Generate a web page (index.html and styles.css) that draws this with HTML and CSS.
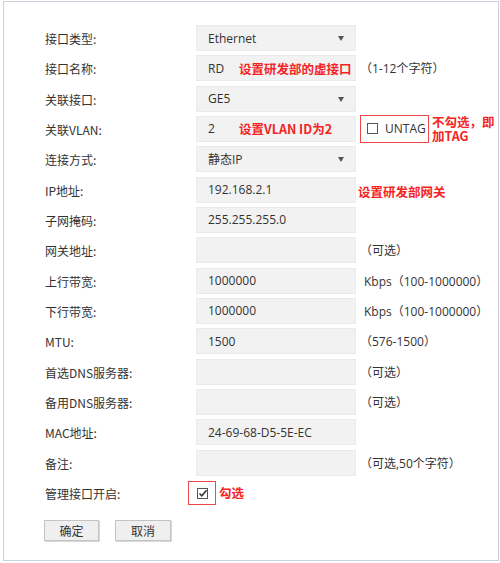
FILE: index.html
```html
<!DOCTYPE html>
<html lang="zh-CN">
<head>
<meta charset="utf-8">
<title>接口设置</title>
<link rel="stylesheet" href="styles.css">
</head>
<body>
<div class="frame">
  <div class="form">
    <div class="row">
      <div class="label">接口类型:</div>
      <div class="field select"><span>Ethernet</span><i class="arrow"></i></div>
    </div>
    <div class="row">
      <div class="label">接口名称:</div>
      <div class="field"><span class="val">RD</span><span class="note">设置研发部的虚接口</span></div>
      <div class="hint">（1-12个字符）</div>
    </div>
    <div class="row">
      <div class="label">关联接口:</div>
      <div class="field select"><span>GE5</span><i class="arrow"></i></div>
    </div>
    <div class="row">
      <div class="label">关联VLAN:</div>
      <div class="field"><span class="val">2</span><span class="note">设置VLAN ID为2</span></div>
      <div class="extra">
        <div class="untag"><span class="cb"></span><span>UNTAG</span></div>
        <div class="note note-two"><div class="ln">不勾选，即</div><div class="ln">加TAG</div></div>
      </div>
    </div>
    <div class="row">
      <div class="label">连接方式:</div>
      <div class="field select"><span>静态IP</span><i class="arrow"></i></div>
    </div>
    <div class="row">
      <div class="label">IP地址:</div>
      <div class="field"><span>192.168.2.1</span></div>
      <div class="note note-gw">设置研发部网关</div>
    </div>
    <div class="row">
      <div class="label">子网掩码:</div>
      <div class="field"><span>255.255.255.0</span></div>
    </div>
    <div class="row">
      <div class="label">网关地址:</div>
      <div class="field"></div>
      <div class="hint">（可选）</div>
    </div>
    <div class="row">
      <div class="label">上行带宽:</div>
      <div class="field"><span>1000000</span></div>
      <div class="hint hint-kbps">Kbps（100-1000000）</div>
    </div>
    <div class="row">
      <div class="label">下行带宽:</div>
      <div class="field"><span>1000000</span></div>
      <div class="hint hint-kbps">Kbps（100-1000000）</div>
    </div>
    <div class="row">
      <div class="label">MTU:</div>
      <div class="field"><span>1500</span></div>
      <div class="hint">（576-1500）</div>
    </div>
    <div class="row">
      <div class="label">首选DNS服务器:</div>
      <div class="field"></div>
      <div class="hint">（可选）</div>
    </div>
    <div class="row">
      <div class="label">备用DNS服务器:</div>
      <div class="field"></div>
      <div class="hint">（可选）</div>
    </div>
    <div class="row">
      <div class="label">MAC地址:</div>
      <div class="field"><span>24-69-68-D5-5E-EC</span></div>
    </div>
    <div class="row">
      <div class="label">备注:</div>
      <div class="field"></div>
      <div class="hint">（可选,50个字符）</div>
    </div>
    <div class="row">
      <div class="label">管理接口开启:</div>
      <div class="enable">
        <div class="redbox"><span class="cb checked"><svg viewBox="0 0 11 11" width="11" height="11"><path d="M2.5 5.5 L4.8 7.8 L9.5 2.2" fill="none" stroke="#333" stroke-width="1.6"/></svg></span></div>
        <span class="note note-check">勾选</span>
      </div>
    </div>
  </div>
  <div class="buttons">
    <button class="btn">确定</button>
    <button class="btn">取消</button>
  </div>
</div>
</body>
</html>
```
FILE: styles.css
```css
html, body {
  margin: 0;
  padding: 0;
  background: #fff;
}
body {
  font-family: "Open Sans", "Noto Sans CJK SC", sans-serif;
  font-size: 12px;
  color: #333;
}
.frame {
  box-sizing: border-box;
  width: 496px;
  height: 560px;
  margin: 1px 0 0 3px;
  border: 1px solid #c9d1dc;
  padding: 23px 0 0 41px;
}
.form {
  display: flex;
  flex-direction: column;
  gap: 4.33px;
}
.row {
  display: flex;
  align-items: center;
  height: 26px;
}
.label {
  width: 151px;
  flex: none;
  font-family: "Noto Sans CJK SC", sans-serif;
  color: #333;
  padding-top: 1px;
}
.field {
  box-sizing: border-box;
  width: 160px;
  height: 26px;
  flex: none;
  background: #f2f2f2;
  border: 1px solid #eaeaea;
  display: flex;
  align-items: center;
  padding-left: 11px;
  color: #333;
}
.select {
  justify-content: space-between;
  padding-right: 11px;
}
.arrow {
  width: 0;
  height: 0;
  border-top: 5px solid #555;
  border-left: 3.5px solid transparent;
  border-right: 3.5px solid transparent;
  margin-top: 1px;
}
.val {
  width: 31px;
  flex: none;
}
.note {
  font-family: "Noto Sans CJK SC", sans-serif;
  font-weight: 700;
  color: #f52424;
  font-size: 12.5px;
}
.hint {
  margin-left: 4px;
  font-family: "Open Sans", "Noto Sans CJK SC", sans-serif;
  color: #333;
}
.hint-kbps {
  margin-left: 8px;
}
.extra {
  display: flex;
  align-items: center;
}
.untag {
  box-sizing: border-box;
  margin-left: 4px;
  width: 69px;
  height: 28px;
  border: 1px solid #f04848;
  display: flex;
  align-items: center;
  padding-left: 6px;
  gap: 7px;
  color: #333;
}
.cb {
  box-sizing: border-box;
  display: inline-flex;
  width: 11px;
  height: 11px;
  border: 1px solid #555;
  background: #fff;
  flex: none;
}
.cb svg {
  display: block;
  margin: -1px;
}
.note-two {
  margin-left: 3px;
  margin-top: 1px;
  display: flex;
  flex-direction: column;
}
.note-two .ln {
  height: 14px;
  line-height: 14px;
  white-space: nowrap;
}
.note-gw {
  margin-left: 2px;
  margin-top: 4px;
}
.enable {
  display: flex;
  align-items: center;
  margin-left: -8px;
}
.redbox {
  box-sizing: border-box;
  width: 28px;
  height: 24px;
  border: 1px solid #f04848;
  display: flex;
  align-items: center;
  padding-left: 8px;
  padding-top: 1px;
}
.note-check {
  margin-left: 3px;
}
.buttons {
  display: flex;
  gap: 16px;
  margin-top: 14px;
  margin-left: -1px;
}
.btn {
  box-sizing: border-box;
  height: 21px;
  width: 55px;
  padding: 0;
  background: #efefef;
  border: 1px solid #c4c4c4;
  box-shadow: 1px 1px 0 #d8d8d8;
  font-family: "Noto Sans CJK SC", sans-serif;
  font-size: 12px;
  color: #333;
}
.btn + .btn {
  width: 56px;
}
```
